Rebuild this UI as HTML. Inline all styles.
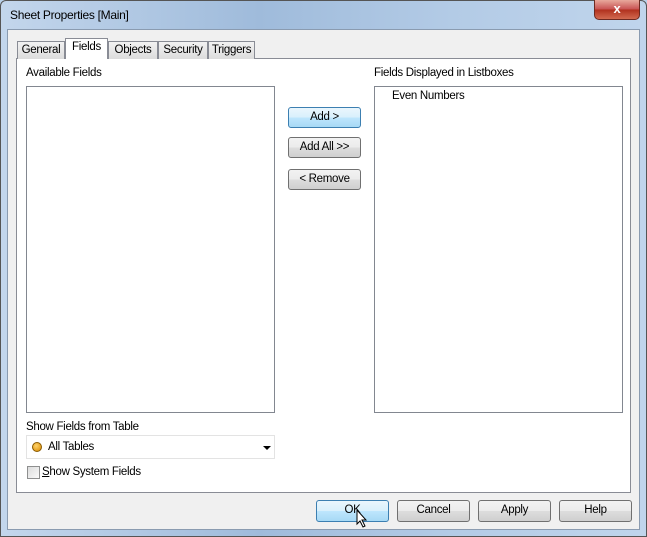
<!DOCTYPE html>
<html><head><style>
*{box-sizing:border-box;margin:0;padding:0}
body{width:647px;height:537px;overflow:hidden;font-family:"Liberation Sans",sans-serif;font-size:11.5px;letter-spacing:-0.3px;color:#000;position:relative;background:#b9d1ea}
.abs{position:absolute}
.frame{left:0;top:0;width:647px;height:537px;border:1px solid #555;border-radius:6px 6px 0 0;background:linear-gradient(90deg,#c3d6ec 0%,#9fbbdb 40%,#b3cbe6 70%,#c0d5ec 100%)}
.client{left:7px;top:29px;width:633px;height:501px;background:#f0f0f0;border:1px solid #8a9bb0}
.tabpanel{left:16px;top:58px;width:615px;height:435px;background:#fff;border:1px solid #898c95}
.tab{top:41px;height:18px;border:1px solid #898c95;border-bottom:none;background:linear-gradient(#f2f2f2,#dcdcdc);text-align:center;line-height:17px;font-size:11.5px}
.list{background:#fff;border:1px solid #828790}
.btn{border:1px solid #707070;border-radius:3px;background:linear-gradient(#f2f2f2 0%,#ebebeb 50%,#dddddd 51%,#cfcfcf 100%);text-align:center;font-size:11.5px;line-height:19px}
.def{border-color:#3c7fb1;background:linear-gradient(#eaf6fd 0%,#d9f0fc 50%,#bee6fd 51%,#a7d9f5 100%)}
</style></head><body>
<div class="abs frame"></div>
<div class="abs" style="left:10px;top:8px;font-size:12px">Sheet Properties [Main]</div>
<div class="abs" style="left:594px;top:0;width:46px;height:20px;border:1px solid #6d2a22;border-top:none;border-radius:0 0 5px 5px;background:linear-gradient(#e8a99c,#c75050 50%,#b0301d 51%,#d26a50);color:#fff;font-weight:bold;text-align:center;line-height:18px;font-size:13px">x</div>
<div class="abs client"></div>
<div class="abs tabpanel"></div>
<div class="abs tab" style="left:17px;width:48px">General</div>
<div class="abs tab" style="left:65px;top:38px;width:43px;height:21px;background:#fff;z-index:2">Fields</div>
<div class="abs tab" style="left:108px;width:50px">Objects</div>
<div class="abs tab" style="left:158px;width:50px">Security</div>
<div class="abs tab" style="left:208px;width:47px">Triggers</div>
<div class="abs" style="left:26px;top:67px">Available Fields</div>
<div class="abs" style="left:374px;top:67px">Fields Displayed in Listboxes</div>
<div class="abs list" style="left:26px;top:86px;width:249px;height:327px"></div>
<div class="abs list" style="left:374px;top:86px;width:249px;height:327px"></div>
<div class="abs" style="left:392px;top:90px">Even Numbers</div>
<div class="abs btn def" style="left:288px;top:107px;width:73px;height:21px">Add &gt;</div>
<div class="abs btn" style="left:288px;top:137px;width:73px;height:21px">Add All &gt;&gt;</div>
<div class="abs btn" style="left:288px;top:169px;width:73px;height:21px">&lt; Remove</div>
<div class="abs" style="left:26px;top:421px">Show Fields from Table</div>
<div class="abs" style="left:26px;top:435px;width:249px;height:24px;border:1px solid #e3e3e3;background:#fff"></div>
<div class="abs" style="left:32px;top:442px;width:10px;height:10px;border-radius:50%;background:radial-gradient(circle at 40% 35%,#ffd36b,#d98a00);border:1px solid #8a5a00"></div>
<div class="abs" style="left:48px;top:441px">All Tables</div>
<div class="abs" style="left:263px;top:446px;width:0;height:0;border-left:4px solid transparent;border-right:4px solid transparent;border-top:4px solid #000"></div>
<div class="abs" style="left:27px;top:466px;width:13px;height:13px;border:1px solid #8e8f8f;background:linear-gradient(135deg,#dcdcdc,#fafafa)"></div>
<div class="abs" style="left:42px;top:466px"><u>S</u>how System Fields</div>
<div class="abs btn def" style="left:316px;top:500px;width:73px;height:22px">OK</div>
<div class="abs btn" style="left:397px;top:500px;width:73px;height:22px">Cancel</div>
<div class="abs btn" style="left:478px;top:500px;width:73px;height:22px">Apply</div>
<div class="abs btn" style="left:559px;top:500px;width:73px;height:22px">Help</div>
<svg class="abs" style="left:356px;top:509px" width="12" height="20" viewBox="0 0 12 20"><path d="M1 1 L1 15 L4 12 L7 18 L9 17 L6 11 L10 11 Z" fill="#fff" stroke="#000" stroke-width="1"/></svg>
</body></html>
